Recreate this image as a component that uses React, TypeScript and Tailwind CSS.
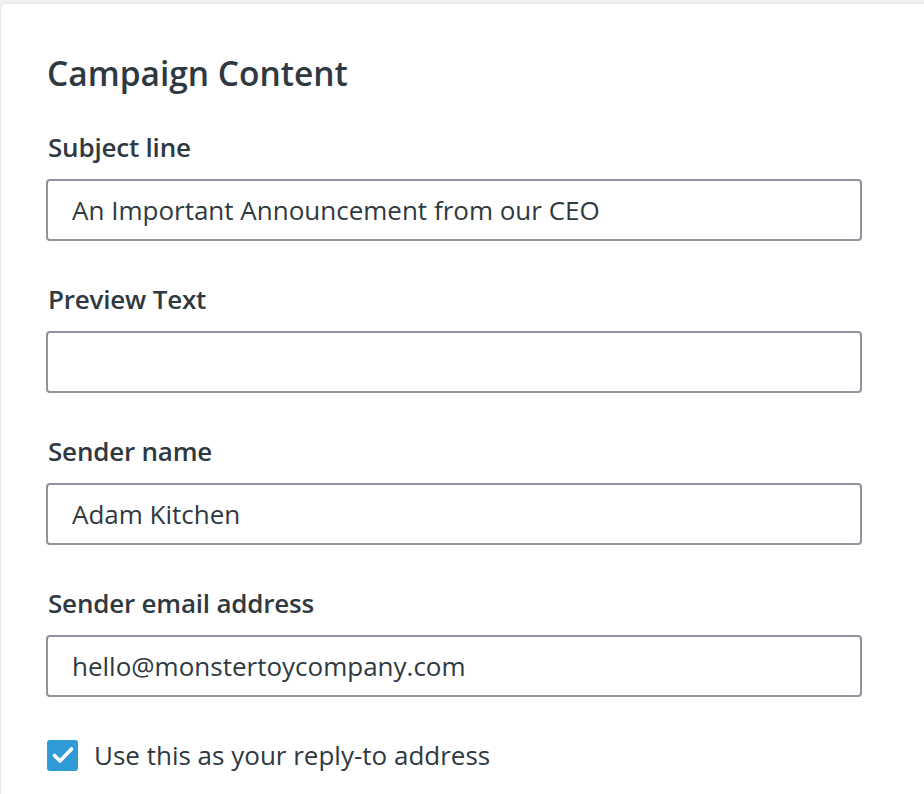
import React from 'react';

const fields = [
  { label: 'Subject line', value: 'An Important Announcement from our CEO' },
  { label: 'Preview Text', value: '' },
  { label: 'Sender name', value: 'Adam Kitchen' },
  { label: 'Sender email address', value: 'hello@monstertoycompany.com' },
];

const App: React.FC = () => {
  return (
    <div className="min-h-[794px] bg-[#eef0f2] pt-[3px] font-['Open_Sans',sans-serif] text-[#2f3941]">
      <div className="min-h-[791px] bg-white rounded-tl-md border-t border-l border-[#e6e8eb] pl-[45px] pr-[62px]">
        <h1 className="pt-[49px] pl-px text-[33.5px] leading-[40px] font-semibold">Campaign Content</h1>

        <div className="mt-[38px] flex flex-col gap-[42px]">
          {fields.map(f => (
            <div key={f.label} className="flex flex-col">
              <label className="pl-[2px] text-[26px] leading-[32px] font-semibold tracking-[-0.2px]">{f.label}</label>
              <input
                readOnly
                value={f.value}
                className="mt-[16px] h-[62px] w-full rounded-[4px] border-2 border-[#8e949c] px-[24px] text-[26px] text-[#2f3941] outline-none font-['Open_Sans',sans-serif]"
              />
            </div>
          ))}
        </div>

        <label className="mt-[42px] flex items-center gap-[16px] pl-px">
          <span className="flex h-[31px] w-[31px] items-center justify-center rounded-[3px] bg-[#2f9bd6]">
            <svg width="22" height="18" viewBox="0 0 22 18" fill="none">
              <path d="M2.5 9.5l5.5 5.5L19.5 3" stroke="white" strokeWidth="3.6" strokeLinecap="round" strokeLinejoin="round" />
            </svg>
          </span>
          <span className="text-[26px] leading-[32px]">Use this as your reply-to address</span>
        </label>
      </div>
    </div>
  );
};

export default App;
